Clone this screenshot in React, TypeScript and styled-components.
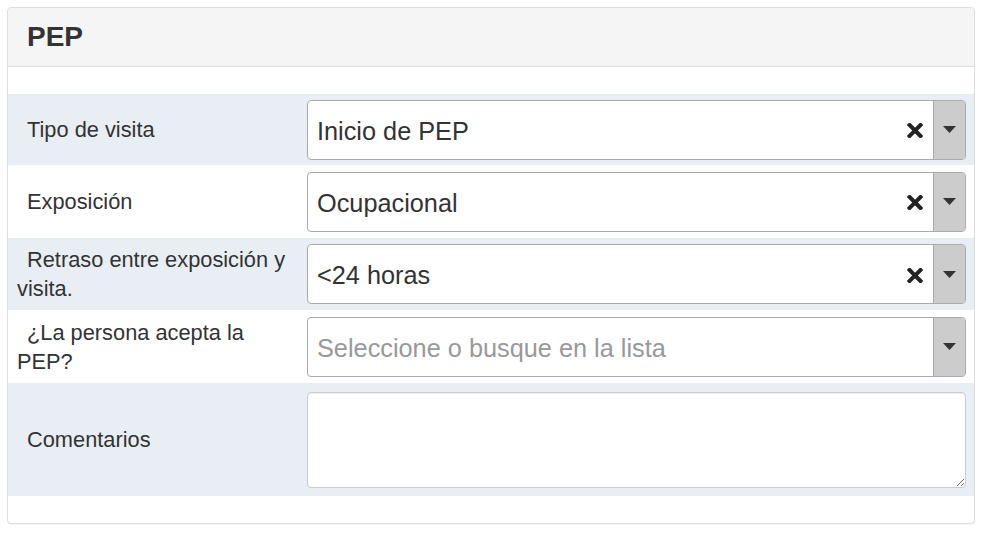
import React from "react";
import styled, { createGlobalStyle } from "styled-components";

const Global = createGlobalStyle`
  html, body { margin: 0; padding: 0; background: #fff; }
  body { font-family: "Liberation Sans", Arial, sans-serif; color: #333; }
  * { box-sizing: border-box; }
`;

const Page = styled.div`
  padding: 7px 11px 10px 7px;
`;

const Panel = styled.div`
  border: 1px solid #ddd;
  border-radius: 4px;
  background: #fff;
  box-shadow: 0 1px 1px rgba(0,0,0,0.05);
  overflow: hidden;
`;

const Header = styled.div`
  background: #f5f5f5;
  border-bottom: 1px solid #ddd;
  height: 59px;
  display: flex;
  align-items: center;
  padding-left: 19px;
`;

const Title = styled.h3`
  margin: 0;
  font-size: 28px;
  font-weight: bold;
  color: #333;
  line-height: 1;
`;

const Body = styled.div`
  padding: 27px 0 27px;
`;

const Row = styled.div<{ $alt: boolean; $h: number }>`
  display: grid;
  grid-template-columns: 278px 1fr;
  column-gap: 12px;
  align-items: center;
  height: ${(p) => p.$h}px;
  padding: 0 8px 0 9px;
  background: ${(p) => (p.$alt ? "#e9eef5" : "#fff")};
`;

const Label = styled.div`
  font-size: 21.8px;
  line-height: 29px;
  text-indent: 10px;
  color: #333;
`;

const Select = styled.div`
  display: flex;
  align-items: stretch;
  height: 60px;
  border: 1px solid #aaa;
  border-radius: 4px;
  background: #fff;
  overflow: hidden;
`;

const Value = styled.div<{ $placeholder?: boolean }>`
  flex: 1;
  display: flex;
  align-items: center;
  padding: 3px 0 0 9px;
  font-size: 25.3px;
  color: ${(p) => (p.$placeholder ? "#999" : "#333")};
  white-space: nowrap;
`;

const Clear = styled.div`
  display: flex;
  align-items: center;
  justify-content: center;
  width: 20px;
  margin-right: 8px;
  padding-top: 2px;
`;

const Arrow = styled.div`
  width: 32px;
  background: #ccc;
  border-left: 1px solid #aaa;
  display: flex;
  align-items: center;
  justify-content: center;
`;

const TextArea = styled.textarea`
  display: block;
  width: 100%;
  height: 96px;
  border: 1px solid #ccc;
  border-radius: 4px;
  box-shadow: inset 0 1px 1px rgba(0,0,0,0.075);
  font-family: "Liberation Sans", Arial, sans-serif;
  font-size: 18px;
  padding: 6px 12px;
  resize: vertical;
  outline: none;
`;

const XIcon = () => (
  <svg width="16" height="15" viewBox="0 0 16 15">
    <path d="M2.5 2 L13.5 13 M13.5 2 L2.5 13" stroke="#222" strokeWidth="4" strokeLinecap="square" />
  </svg>
);

const Caret = () => (
  <svg width="13" height="7" viewBox="0 0 13 7">
    <path d="M0 0 H13 L6.5 7 Z" fill="#333" />
  </svg>
);

type Field = { label: string; value?: string; placeholder?: string; h: number };

const fields: Field[] = [
  { label: "Tipo de visita", value: "Inicio de PEP", h: 71 },
  { label: "Exposición", value: "Ocupacional", h: 73 },
  { label: "Retraso entre exposición y visita.", value: "<24 horas", h: 72 },
  { label: "¿La persona acepta la PEP?", placeholder: "Seleccione o busque en la lista", h: 73 },
];

export default function App() {
  return (
    <Page>
      <Global />
      <Panel>
        <Header>
          <Title>PEP</Title>
        </Header>
        <Body>
          {fields.map((f, i) => (
            <Row key={f.label} $alt={i % 2 === 0} $h={f.h}>
              <Label>{f.label}</Label>
              <Select>
                <Value $placeholder={!f.value}>{f.value ?? f.placeholder}</Value>
                {f.value && (
                  <Clear>
                    <XIcon />
                  </Clear>
                )}
                <Arrow>
                  <Caret />
                </Arrow>
              </Select>
            </Row>
          ))}
          <Row $alt={true} $h={113}>
            <Label>Comentarios</Label>
            <TextArea />
          </Row>
        </Body>
      </Panel>
    </Page>
  );
}
